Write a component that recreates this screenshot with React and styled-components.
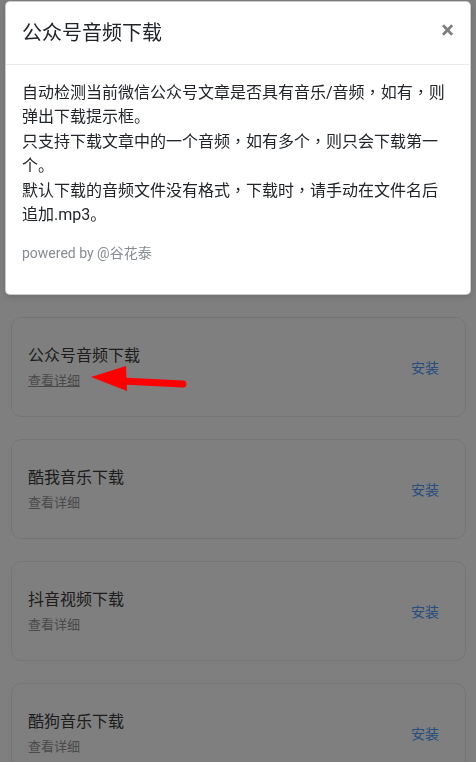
import React from "react";
import styled, { createGlobalStyle } from "styled-components";

const Global = createGlobalStyle`
  html, body { margin: 0; padding: 0; background: #fff; }
  body {
    font-family: Roboto, "Noto Sans CJK SC", "Noto Sans", sans-serif;
    color: #212529;
    -webkit-font-smoothing: antialiased;
  }
  * { box-sizing: border-box; }
`;

const Page = styled.div`
  position: relative;
  min-height: 762px;
  overflow: hidden;
`;

const List = styled.div`
  display: flex;
  flex-direction: column;
  gap: 22px;
  padding: 73px 10px 0 11px;
`;

const Card = styled.div`
  height: 100px;
  display: flex;
  align-items: center;
  justify-content: space-between;
  padding: 0 16px;
  background: #fff;
  border: 1px solid #ebebeb;
  border-radius: 10px;
`;

const Info = styled.div`
  display: flex;
  flex-direction: column;
  gap: 5px;
`;

const Title = styled.div`
  font-size: 16px;
  line-height: 22px;
  color: #3a3a3a;
`;

const Detail = styled.a`
  font-size: 13px;
  line-height: 18px;
  color: #949494;
  text-decoration: ${(p) => (p.$active ? "underline" : "none")};
`;

const Install = styled.button`
  border: 0;
  background: none;
  padding: 0 10px;
  font-family: inherit;
  font-size: 14px;
  line-height: 20px;
  color: #4a9cff;
  margin-top: 2px;
`;

const Overlay = styled.div`
  position: fixed;
  inset: 0;
  background: rgba(0, 0, 0, 0.5);
  z-index: 10;
`;

const Modal = styled.div`
  position: absolute;
  top: 1px;
  left: 5px;
  width: 466px;
  background: #fff;
  border: 1px solid rgba(0, 0, 0, 0.2);
  border-radius: 5px;
  box-shadow: 0 2px 6px rgba(0, 0, 0, 0.15);
  z-index: 20;
`;

const Header = styled.div`
  display: flex;
  align-items: flex-start;
  justify-content: space-between;
  padding: 16px;
  border-bottom: 1px solid #e9ecef;
`;

const ModalTitle = styled.h5`
  margin: 0;
  font-size: 20px;
  line-height: 30px;
  font-weight: 400;
  color: #212529;
`;

const Close = styled.button`
  border: 0;
  background: none;
  padding: 16px;
  margin: -16px -16px -16px auto;
  font-family: Roboto, sans-serif;
  font-size: 24px;
  font-weight: 700;
  line-height: 1;
  color: #000;
  opacity: 0.5;
`;

const Body = styled.div`
  padding: 16px 18px 16px 16px;
`;

const Text = styled.p`
  margin: 0;
  font-size: 16px;
  line-height: 24.4px;
  color: #212529;
`;

const Punct = styled.span`
  font-family: "Noto Sans CJK TC", sans-serif;
  line-height: 1;
`;

const Powered = styled.p`
  margin: 16px 0 14px;
  font-size: 14px;
  line-height: 21px;
  color: #878d93;
`;

const Arrow = styled.svg`
  position: absolute;
  left: 86px;
  top: 362px;
  z-index: 30;
`;

const items = [
  { name: "网易云音乐下载" },
  { name: "QQ音乐下载" },
  { name: "公众号音频下载", active: true },
  { name: "酷我音乐下载" },
  { name: "抖音视频下载" },
  { name: "酷狗音乐下载" },
];

const C = () => <Punct>，</Punct>;

export default function App() {
  return (
    <Page>
      <Global />
      <List>
        {items.map((it) => (
          <Card key={it.name}>
            <Info>
              <Title>{it.name}</Title>
              <Detail $active={it.active}>查看详细</Detail>
            </Info>
            <Install>安装</Install>
          </Card>
        ))}
      </List>
      <Overlay />
      <Modal>
        <Header>
          <ModalTitle>公众号音频下载</ModalTitle>
          <Close>×</Close>
        </Header>
        <Body>
          <Text>
            自动检测当前微信公众号文章是否具有音乐/音频<C />如有<C />则弹出下载提示框。
            <br />
            只支持下载文章中的一个音频<C />如有多个<C />则只会下载第一个。
            <br />
            默认下载的音频文件没有格式<C />下载时<C />请手动在文件名后追加.mp3。
          </Text>
          <Powered>powered by @谷花泰</Powered>
        </Body>
      </Modal>
      <Arrow width="104" height="34" viewBox="86 362 104 34">
        <polygon points="91,377 126,366 127,391" fill="#ff0000" />
        <line x1="122" y1="381" x2="183" y2="384" stroke="#ff0000" strokeWidth="7" strokeLinecap="round" />
      </Arrow>
    </Page>
  );
}
